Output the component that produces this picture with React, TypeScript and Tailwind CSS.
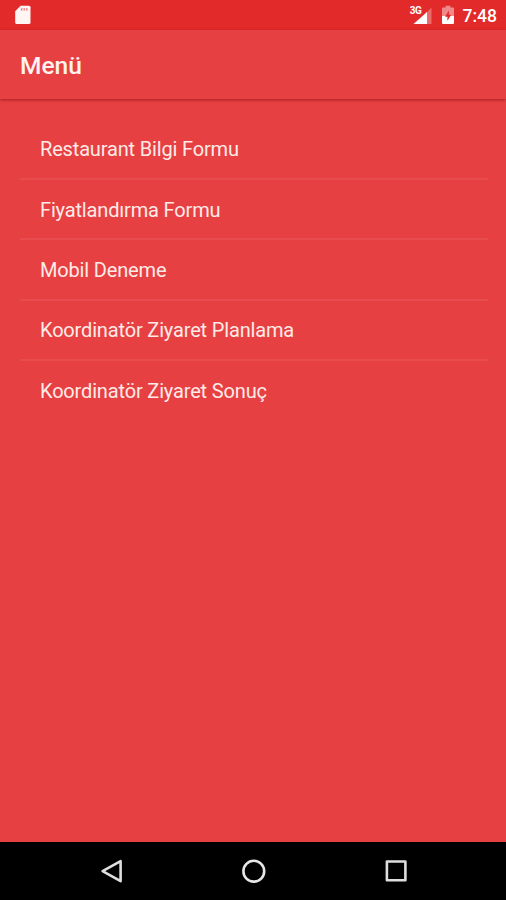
const menuItems = [
  'Restaurant Bilgi Formu',
  'Fiyatlandırma Formu',
  'Mobil Deneme',
  'Koordinatör Ziyaret Planlama',
  'Koordinatör Ziyaret Sonuç',
];

const StatusBar = () => {
  return (
    <div className="flex h-[30px] shrink-0 items-center justify-between bg-[#e32a2a] pl-[15px] pr-[9px] text-white">
      {/* SD card */}
      <svg className="h-5 w-4" viewBox="0 0 16 20" fill="none">
        <path d="M5.6 0.7H14Q15.5 0.7 15.5 2.2V17.4Q15.5 19 14 19H1.7Q0.2 19 0.2 17.4V6.3Z" fill="#fff5f3" />
        <path d="M6.6 3.2V5.4M9.2 3.2V5.4M11.8 3.2V5.4" stroke="#e32a2a" strokeOpacity="0.6" strokeWidth="1.5" />
      </svg>

      <div className="flex items-center">
        {/* Signal strength */}
        <svg className="mr-[10px] h-5 w-[23px]" viewBox="0 0 23 20">
          <path d="M22.5 2.5V19H17.5V7.5Z" fill="#fff" fillOpacity="0.3" />
          <path d="M18 7V19H4.5Z" fill="#fff" />
          <text x="0.8" y="9.2" fill="#fff" className="font-['Roboto'] text-[10px] font-bold tracking-[-0.5px]">3G</text>
        </svg>

        {/* Battery */}
        <svg className="mr-[9px] h-5 w-3" viewBox="0 0 12 20">
          <path d="M0 3.6Q0 2.5 1.1 2.5H3.6V0.8H8.4V2.5H10.9Q12 2.5 12 3.6V11H0Z" fill="#fff" fillOpacity="0.45" />
          <path d="M0 11H12V17.9Q12 19 10.9 19H1.1Q0 19 0 17.9Z" fill="#fff" />
          <path d="M6.9 5.5L3 11.8H5.4V16L9.2 9.8H6.9Z" fill="#e32a2a" />
        </svg>

        <span className="pt-0.5 text-[17.5px] font-medium leading-5">7:48</span>
      </div>
    </div>
  );
};

const NavigationBar = () => {
  return (
    <div className="flex h-[58px] shrink-0 items-center justify-center bg-black">
      <svg className="h-6 w-[142px]" viewBox="0 0 142 24" fill="none" stroke="#dedede" strokeWidth="2.6" strokeLinejoin="round">
        <path d="M80.6 2.2V22.2L62.6 12.2Z" />
      </svg>
      <svg className="h-6 w-[142px]" viewBox="0 0 142 24" fill="none" stroke="#e6e6e6" strokeWidth="2.6">
        <circle cx="71.8" cy="12.2" r="10.4" />
      </svg>
      <svg className="h-6 w-[142px]" viewBox="0 0 142 24" fill="none" stroke="#dedede" strokeWidth="2.6" strokeLinejoin="round">
        <path d="M62.9 2.5H81.4V21.2H62.9Z" />
      </svg>
    </div>
  );
};

const App = () => {
  return (
    <div className="flex h-[900px] w-full flex-col bg-[#e64042] font-['Roboto',sans-serif]">
      <StatusBar />

      <header className="z-10 flex h-[69px] shrink-0 items-center px-5 pt-1 shadow-[0_1px_3px_rgba(120,0,0,0.55)]">
        <h1 className="text-[24.5px] font-medium text-[#fff3f0]">Menü</h1>
      </header>

      <ul className="flex-1 pl-5 pr-[18px] pt-[20.5px]">
        {menuItems.map((item) => (
          <li
            key={item}
            className="flex h-[60.45px] items-center border-b-2 border-[#e84c4e] px-5 pt-[0.8px] text-xl tracking-[-0.16px] text-[#ffeae7] last:border-transparent"
          >
            {item}
          </li>
        ))}
      </ul>

      <NavigationBar />
    </div>
  );
};

export default App;
